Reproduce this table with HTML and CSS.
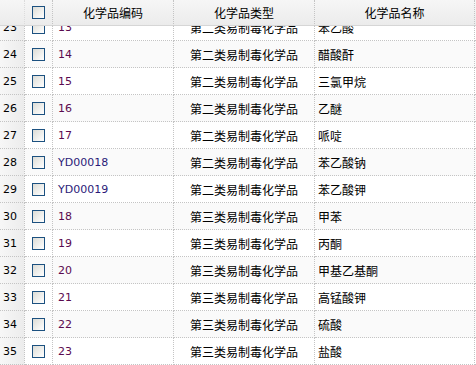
FILE: index.html
```html
<!DOCTYPE html>
<html lang="zh">
<head>
<meta charset="utf-8">
<link rel="stylesheet" href="styles.css">
</head>
<body>
<div class="grid">
  <div class="row head">
    <div class="cell num"></div>
    <div class="cell chk"><span class="box"></span></div>
    <div class="cell code">化学品编码</div>
    <div class="cell type">化学品类型</div>
    <div class="cell name center">化学品名称</div>
    <div class="cell rest"></div>
  </div>
  <div class="body">
    <div class="rows">
      <div class="row"><div class="cell num">23</div><div class="cell chk"><span class="box"></span></div><div class="cell code c-num">13</div><div class="cell type">第二类易制毒化学品</div><div class="cell name">苯乙酸</div><div class="cell rest"></div></div>
      <div class="row alt"><div class="cell num">24</div><div class="cell chk"><span class="box"></span></div><div class="cell code c-num">14</div><div class="cell type">第二类易制毒化学品</div><div class="cell name">醋酸酐</div><div class="cell rest"></div></div>
      <div class="row"><div class="cell num">25</div><div class="cell chk"><span class="box"></span></div><div class="cell code c-num">15</div><div class="cell type">第二类易制毒化学品</div><div class="cell name">三氯甲烷</div><div class="cell rest"></div></div>
      <div class="row alt"><div class="cell num">26</div><div class="cell chk"><span class="box"></span></div><div class="cell code c-num">16</div><div class="cell type">第二类易制毒化学品</div><div class="cell name">乙醚</div><div class="cell rest"></div></div>
      <div class="row"><div class="cell num">27</div><div class="cell chk"><span class="box"></span></div><div class="cell code c-num">17</div><div class="cell type">第二类易制毒化学品</div><div class="cell name">哌啶</div><div class="cell rest"></div></div>
      <div class="row alt"><div class="cell num">28</div><div class="cell chk"><span class="box"></span></div><div class="cell code c-yd">YD00018</div><div class="cell type">第二类易制毒化学品</div><div class="cell name">苯乙酸钠</div><div class="cell rest"></div></div>
      <div class="row"><div class="cell num">29</div><div class="cell chk"><span class="box"></span></div><div class="cell code c-yd">YD00019</div><div class="cell type">第二类易制毒化学品</div><div class="cell name">苯乙酸钾</div><div class="cell rest"></div></div>
      <div class="row alt"><div class="cell num">30</div><div class="cell chk"><span class="box"></span></div><div class="cell code c-num">18</div><div class="cell type">第三类易制毒化学品</div><div class="cell name">甲苯</div><div class="cell rest"></div></div>
      <div class="row"><div class="cell num">31</div><div class="cell chk"><span class="box"></span></div><div class="cell code c-num">19</div><div class="cell type">第三类易制毒化学品</div><div class="cell name">丙酮</div><div class="cell rest"></div></div>
      <div class="row alt"><div class="cell num">32</div><div class="cell chk"><span class="box"></span></div><div class="cell code c-num">20</div><div class="cell type">第三类易制毒化学品</div><div class="cell name">甲基乙基酮</div><div class="cell rest"></div></div>
      <div class="row"><div class="cell num">33</div><div class="cell chk"><span class="box"></span></div><div class="cell code c-num">21</div><div class="cell type">第三类易制毒化学品</div><div class="cell name">高锰酸钾</div><div class="cell rest"></div></div>
      <div class="row alt"><div class="cell num">34</div><div class="cell chk"><span class="box"></span></div><div class="cell code c-num">22</div><div class="cell type">第三类易制毒化学品</div><div class="cell name">硫酸</div><div class="cell rest"></div></div>
      <div class="row"><div class="cell num">35</div><div class="cell chk"><span class="box"></span></div><div class="cell code c-num">23</div><div class="cell type">第三类易制毒化学品</div><div class="cell name">盐酸</div><div class="cell rest"></div></div>
    </div>
  </div>
</div>
</body>
</html>
```

FILE: styles.css
```css
html, body {
  margin: 0;
  padding: 0;
  background: #ffffff;
}

.grid {
  width: 476px;
  height: 365px;
  overflow: hidden;
  display: flex;
  flex-direction: column;
  font-family: "Noto Sans CJK SC", "DejaVu Sans", sans-serif;
  font-size: 12px;
  color: #000;
}

.row {
  display: grid;
  grid-template-columns: 25px 28px 121px 141px 160px 1px;
  height: 27px;
}

.cell {
  box-sizing: border-box;
  border-right: 1px dotted #c4c4c4;
  border-bottom: 1px dotted #c4c4c4;
  display: flex;
  align-items: center;
  white-space: nowrap;
  overflow: hidden;
}

.cell.rest {
  border-right: none;
}

.head {
  height: 26px;
  background: linear-gradient(#f6f6f6, #ebebeb);
  flex: none;
}

.head .cell {
  border-bottom: 1px solid #d6d6d6;
  justify-content: center;
  color: #000;
}

.head .cell.num {
  border-right: 1px dotted #dcdcdc;
}

.body {
  flex: 1;
  overflow: hidden;
}

.rows {
  margin-top: -12px;
}

.row.alt .cell {
  background: #fafafa;
}

.cell.num,
.row.alt .cell.num {
  background: linear-gradient(90deg, #f7f7f7, #ececec);
  font-family: "DejaVu Sans", sans-serif;
  font-size: 11px;
  padding-left: 3px;
}

.head .cell.num {
  background: transparent;
}

.cell.chk {
  justify-content: center;
}

.box {
  display: block;
  width: 13px;
  height: 13px;
  box-sizing: border-box;
  border: 1px solid #1c5180;
  background: linear-gradient(135deg, #dcdcd6, #f5f5f3 70%, #ffffff);
}

.cell.code {
  padding-left: 5px;
  font-family: "DejaVu Sans", sans-serif;
  font-size: 11px;
}

.head .cell.code {
  padding-left: 0;
  font-family: "Noto Sans CJK SC", sans-serif;
  font-size: 12px;
}

.c-num {
  color: #5a0a50;
}

.c-yd {
  color: #2a1a78;
}

.cell.type {
  justify-content: center;
}

.cell.name {
  padding-left: 3px;
}

.cell.name.center {
  padding-left: 0;
}
```
